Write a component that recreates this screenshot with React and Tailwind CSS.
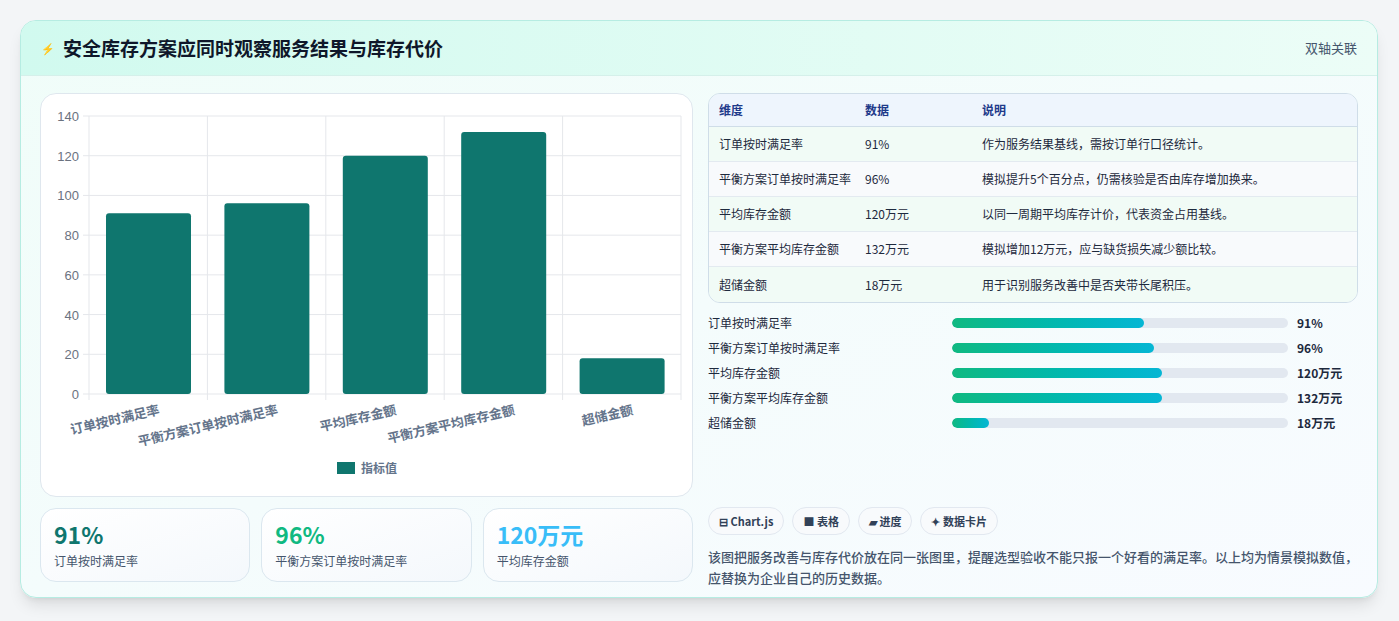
const rows = [
  ["订单按时满足率", "91%", "作为服务结果基线，需按订单行口径统计。"],
  ["平衡方案订单按时满足率", "96%", "模拟提升5个百分点，仍需核验是否由库存增加换来。"],
  ["平均库存金额", "120万元", "以同一周期平均库存计价，代表资金占用基线。"],
  ["平衡方案平均库存金额", "132万元", "模拟增加12万元，应与缺货损失减少额比较。"],
  ["超储金额", "18万元", "用于识别服务改善中是否夹带长尾积压。"],
]
const bars = [["订单按时满足率", "91%", 57], ["平衡方案订单按时满足率", "96%", 60], ["平均库存金额", "120万元", 62.5], ["平衡方案平均库存金额", "132万元", 62.5], ["超储金额", "18万元", 11]]
const vals = [91, 96, 120, 132, 18]

function Chart() {
  const x0 = 48, x1 = 640, yTop = 22, yBot = 300
  const step = (x1 - x0) / 5
  const sy = v => yBot - (v / 140) * (yBot - yTop)
  return (
    <svg width="652" height="403" className="block" style={{ fontFamily: "'Liberation Sans', sans-serif" }}>
      {[0, 20, 40, 60, 80, 100, 120, 140].map(v => (
        <g key={v}>
          <line x1={x0 - 6} x2={x1} y1={sy(v)} y2={sy(v)} stroke="#e5e7eb" />
          <text x={x0 - 10} y={sy(v) + 5} textAnchor="end" fontSize="13" fill="#6b7280">{v}</text>
        </g>
      ))}
      {[0, 1, 2, 3, 4, 5].map(i => (
        <line key={i} x1={x0 + i * step} x2={x0 + i * step} y1={yTop} y2={yBot + 6} stroke="#e5e7eb" />
      ))}
      {vals.map((v, i) => (
        <rect key={i} x={x0 + i * step + 17} y={sy(v)} width={85} height={yBot - sy(v)} rx="3" fill="#0f766e" />
      ))}
      {rows.map((r, i) => (
        <text key={i} x={x0 + i * step + step / 2 + 12} y={yBot + 20} textAnchor="end" fontSize="13" fontWeight="bold" fill="#64748b"
          transform={`rotate(-13 ${x0 + i * step + step / 2 + 12} ${yBot + 20})`} style={{ fontFamily: "'Noto Sans CJK SC', sans-serif" }}>{r[0]}</text>
      ))}
      <rect x="296" y="368" width="18" height="12" fill="#0f766e" />
      <text x="320" y="379" fontSize="12" fontWeight="bold" fill="#64748b" style={{ fontFamily: "'Noto Sans CJK SC', sans-serif" }}>指标值</text>
    </svg>
  )
}

export default function App() {
  return (
    <div className="w-[1399px] h-[621px] bg-[#f3f5f7] pt-[20px] px-[20px]" style={{ fontFamily: "'Noto Sans CJK SC', 'Noto Sans', sans-serif" }}>
      <div className="w-[1358px] h-[578px] rounded-2xl border border-[#b6ece2] bg-gradient-to-br from-[#f0fdf9] to-[#f8fbff] overflow-hidden shadow-lg">
        <div className="h-[55px] flex items-center justify-between px-5 bg-gradient-to-r from-[#d1faef] to-[#ecfdf7] border-b border-[#d5f0ea]">
          <div className="flex items-center gap-2">
            <span className="text-[11px] text-blue-600">⚡</span>
            <h1 className="text-[19px] font-bold text-[#0f172a]">安全库存方案应同时观察服务结果与库存代价</h1>
          </div>
          <span className="text-[13px] text-slate-600">双轴关联</span>
        </div>
        <div className="flex gap-[15px] px-[19px] pt-[17px]">
          <div className="w-[653px] flex flex-col gap-[11px]">
            <div className="h-[404px] rounded-2xl border border-[#dfe7ee] bg-white overflow-hidden"><Chart /></div>
            <div className="grid grid-cols-3 gap-[11px]">
              {[["91%", "订单按时满足率", "text-[#0f766e]"], ["96%", "平衡方案订单按时满足率", "text-[#10b981]"], ["120万元", "平均库存金额", "text-[#38bdf8]"]].map(k => (
                <div key={k[1]} className="h-[74px] rounded-2xl border border-[#dbe7ef] bg-gradient-to-br from-white to-[#f4f8fc] px-[13px] pt-[10px]">
                  <div className={`text-[23px] font-bold leading-[30px] ${k[2]}`}>{k[0]}</div>
                  <div className="text-[12px] text-slate-600 mt-[3px]">{k[1]}</div>
                </div>
              ))}
            </div>
          </div>
          <div className="w-[653px] flex flex-col">
            <div className="rounded-xl border border-[#cfdde8] overflow-hidden text-[12px] text-slate-800">
              <div className="flex h-[33px] items-center bg-[#eef5fd] border-b border-[#cfdde8] font-bold text-[#1e3a8a]">
                <div className="w-[156px] pl-[10px]">维度</div><div className="w-[117px]">数据</div><div>说明</div>
              </div>
              {rows.map((r, i) => (
                <div key={i} className={`flex h-[35px] items-center ${i % 2 ? "bg-[#f8fafc]" : "bg-[#f1fbf6]"} ${i < 4 ? "border-b border-[#e3eaf0]" : ""}`}>
                  <div className="w-[156px] pl-[10px]">{r[0]}</div><div className="w-[117px]">{r[1]}</div><div>{r[2]}</div>
                </div>
              ))}
            </div>
            <div className="flex flex-col gap-[7px] mt-[11px]">
              {bars.map(b => (
                <div key={b[0]} className="flex items-center h-[18px] text-[12px] text-slate-800">
                  <div className="w-[244px]">{b[0]}</div>
                  <div className="w-[336px] h-[10px] rounded-full bg-[#e2e8f0] overflow-hidden">
                    <div className="h-full rounded-full bg-gradient-to-r from-[#10b981] to-[#06b6d4]" style={{ width: `${b[2]}%` }} />
                  </div>
                  <div className="ml-[9px] font-bold">{b[1]}</div>
                </div>
              ))}
            </div>
            <div className="flex gap-[8px] mt-[75px] text-[11px] font-bold text-slate-700">
              {["⊟ Chart.js", "■ 表格", "▰ 进度", "✦ 数据卡片"].map(p => (
                <span key={p} className="h-[28px] px-[10px] flex items-center rounded-full border border-[#e2e8f0] bg-[#f8fafc]">{p}</span>
              ))}
            </div>
            <p className="mt-[11px] text-[13px] leading-[21px] text-slate-600 font-medium">该图把服务改善与库存代价放在同一张图里，提醒选型验收不能只报一个好看的满足率。以上均为情景模拟数值，应替换为企业自己的历史数据。</p>
          </div>
        </div>
      </div>
    </div>
  )
}
